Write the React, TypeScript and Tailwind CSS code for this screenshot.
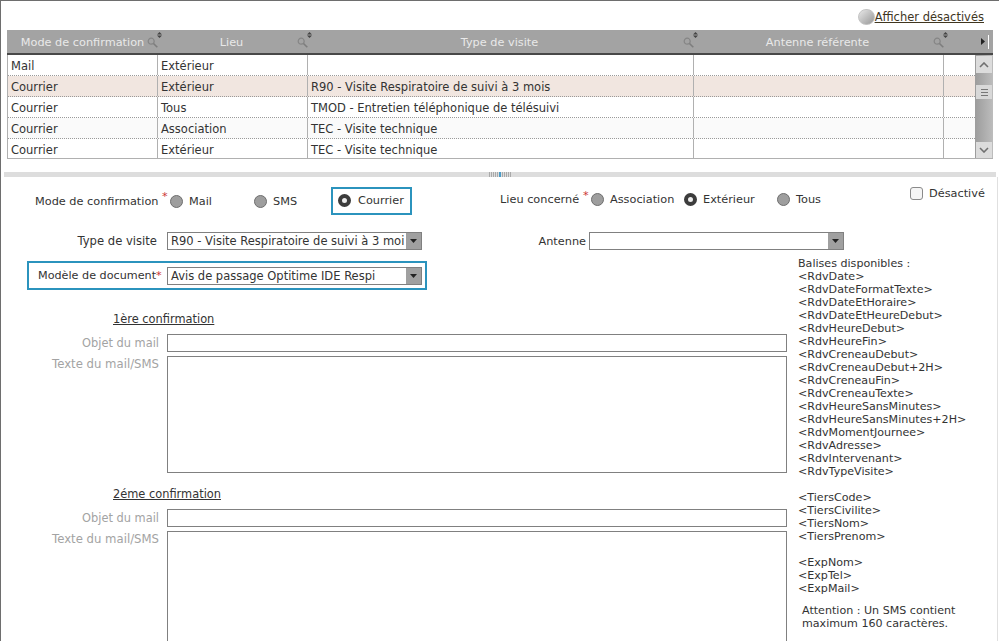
import React from "react";

const rows = [
  ["Mail", "Extérieur", "", false],
  ["Courrier", "Extérieur", "R90 - Visite Respiratoire de suivi à 3 mois", true],
  ["Courrier", "Tous", "TMOD - Entretien téléphonique de télésuivi", false],
  ["Courrier", "Association", "TEC - Visite technique", false],
  ["Courrier", "Extérieur", "TEC - Visite technique", false],
] as const;

const balises1 = ["<RdvDate>","<RdvDateFormatTexte>","<RdvDateEtHoraire>","<RdvDateEtHeureDebut>","<RdvHeureDebut>","<RdvHeureFin>","<RdvCreneauDebut>","<RdvCreneauDebut+2H>","<RdvCreneauFin>","<RdvCreneauTexte>","<RdvHeureSansMinutes>","<RdvHeureSansMinutes+2H>","<RdvMomentJournee>","<RdvAdresse>","<RdvIntervenant>","<RdvTypeVisite>"];
const balises2 = ["<TiersCode>","<TiersCivilite>","<TiersNom>","<TiersPrenom>"];
const balises3 = ["<ExpNom>","<ExpTel>","<ExpMail>"];

function Search() {
  return (
    <svg width="11" height="11" viewBox="0 0 11 11" className="shrink-0 block mt-[1px]">
      <circle cx="4.2" cy="4.2" r="3" fill="none" stroke="#858585" strokeWidth="1.2" />
      <path d="M6.5 6.5l3.8 3.8" stroke="#7d7d7d" strokeWidth="1.6" />
    </svg>
  );
}

function Sort() {
  return (
    <svg width="5" height="6" viewBox="0 0 5 6" className="absolute right-[-4px] top-[2px]">
      <path d="M0 2.5L2.5 0 5 2.5zM0 3.5h5L2.5 6z" fill="#444" />
    </svg>
  );
}

function Head({ label, w }: { label: string; w: string }) {
  return (
    <div className={`relative flex items-center self-stretch shrink-0 ${w}`}>
      <span className="flex-1 pl-[8px] text-center text-[#e9e9e9] mt-[1px]">{label}</span>
      <Search />
      <Sort />
    </div>
  );
}

function Radio({ on }: { on?: boolean }) {
  return on ? (
    <span className="w-[13px] h-[13px] rounded-full bg-[#eeeeee] border-[4px] border-[#3c3c3c] shrink-0" />
  ) : (
    <span className="w-[13px] h-[13px] rounded-full bg-[#9e9e9e] border border-[#6e6e6e] shrink-0" />
  );
}

function Arrow() {
  return (
    <span className="w-[15px] self-stretch bg-[#a0a0a0] flex items-center justify-center shrink-0">
      <svg width="7" height="4" viewBox="0 0 7 4"><path d="M0 0h7L3.5 4z" fill="#222" /></svg>
    </span>
  );
}

function Select({ value }: { value: string }) {
  return (
    <div className="flex items-stretch border border-[#808080] bg-white w-[255px] h-[18px] shrink-0 text-[11.5px]">
      <span className="flex-1 pl-[3px] overflow-hidden whitespace-nowrap text-[#333] leading-[16px]">{value}</span>
      <Arrow />
    </div>
  );
}

function Confirmation({ title, textH }: { title: string; textH: string }) {
  return (
    <div className="flex flex-col">
      <div className="pl-[112px] h-[21px] underline text-[#333] text-[11.4px]">{title}</div>
      <div className="flex items-center h-[18px]">
        <span className="w-[158px] text-right text-[#a3a3a3] shrink-0 text-[11.4px]">Objet du mail</span>
        <span className="ml-[8px] w-[620px] h-[18px] border border-[#808080] bg-white shrink-0" />
      </div>
      <div className="flex items-start mt-[4px]">
        <span className="w-[158px] text-right text-[#a3a3a3] shrink-0 mt-[2px] text-[11.7px]">Texte du mail/SMS</span>
        <span className={`ml-[8px] w-[620px] border border-[#808080] bg-white shrink-0 ${textH}`} />
      </div>
    </div>
  );
}

export default function App() {
  return (
    <div
      className="w-[999px] h-[641px] overflow-hidden bg-white border-t border-l border-[#6e6e6e] text-[11.3px] leading-[13px] text-[#333] flex flex-col"
      style={{ fontFamily: '"DejaVu Sans", Verdana, sans-serif' }}
    >
      <div className="h-[29px] flex items-start justify-end pr-[15px] pt-[8px] shrink-0">
        <span className="w-[17px] h-[16px] rounded-full bg-gradient-to-br from-[#e8e8e8] to-[#989898] border border-[#c4c4c4] shrink-0" />
        <span className="underline text-[#40361f] text-[11.5px] leading-[16px]">Afficher désactivés</span>
      </div>

      <div className="ml-[6px] w-[986px] h-[129px] border-b border-[#b0b0b0] shrink-0 flex flex-col">
        <div className="h-[25px] bg-[#a3a3a3] border-b-2 border-[#484848] flex items-center shrink-0">
          <div className="w-[3px] shrink-0" />
          <Head label="Mode de confirmation" w="w-[148px]" />
          <Head label="Lieu" w="w-[150px]" />
          <Head label="Type de visite" w="w-[386px]" />
          <Head label="Antenne référente" w="w-[250px]" />
          <div className="flex-1 flex items-center justify-end pr-[4px]">
            <svg width="4" height="7" viewBox="0 0 4 7"><path d="M0 0l4 3.5L0 7z" fill="#222" /></svg>
            <span className="ml-[3px] w-px h-[14px] bg-white" />
          </div>
        </div>
        <div className="flex-1 flex min-h-0 overflow-hidden">
          <div className="flex-1 flex flex-col border-l border-[#b0b0b0] min-w-0 text-[11.5px]">
            {rows.map((r, i) => (
              <div
                key={i}
                className={`h-[21px] shrink-0 flex items-stretch border-b border-dotted border-[#9a9a9a] last:border-b-0 ${r[3] ? "bg-[#f1e6e0]" : i === 3 ? "bg-[#fafafa]" : "bg-white"}`}
              >
                <div className="w-[150px] shrink-0 border-r border-[#b0b0b0] pl-[3px] pt-[5px]">{r[0]}</div>
                <div className="w-[150px] shrink-0 border-r border-[#b0b0b0] pl-[3px] pt-[5px]">{r[1]}</div>
                <div className="w-[386px] shrink-0 border-r border-[#b0b0b0] pl-[3px] pt-[5px]">{r[2]}</div>
                <div className="w-[250px] shrink-0 border-r border-[#b0b0b0]" />
                <div className="flex-1" />
              </div>
            ))}
          </div>
          <div className="w-[18px] shrink-0 bg-gradient-to-r from-[#9c9c9c] to-[#bdbdbd] flex flex-col">
            <div className="h-[17px] mt-[1px] mx-[1px] bg-[#dcdcdc] flex items-center justify-center shrink-0">
              <svg width="10" height="6" viewBox="0 0 10 6"><path d="M1 5l4-4 4 4" fill="none" stroke="#707070" strokeWidth="1.6" /></svg>
            </div>
            <div className="mt-[12px] h-[14px] mx-[1px] bg-[#d8d8d8] flex flex-col items-center justify-center gap-[2px] shrink-0">
              <span className="w-[7px] h-px bg-[#777]" />
              <span className="w-[7px] h-px bg-[#777]" />
              <span className="w-[7px] h-px bg-[#777]" />
            </div>
            <div className="flex-1" />
            <div className="h-[16px] mx-[1px] bg-[#dcdcdc] flex items-center justify-center shrink-0">
              <svg width="10" height="6" viewBox="0 0 10 6"><path d="M1 1l4 4 4-4" fill="none" stroke="#707070" strokeWidth="1.6" /></svg>
            </div>
          </div>
        </div>
      </div>

      <div className="mt-[13px] ml-[3px] w-[992px] h-[5px] bg-[#dddddd] flex items-center justify-center shrink-0">
        <div className="h-[5px] flex justify-center gap-px">
          {[0,1,2,3,4].map((i) => <span key={i} className="w-px h-full bg-[#aaa]" />)}
          <span className="w-[2px] h-full bg-[#4a9cc8]" />
          {[0,1,2,3,4].map((i) => <span key={i} className="w-px h-full bg-[#aaa]" />)}
        </div>
      </div>

      <div className="flex-1 flex flex-col min-h-0 pt-[9px] mr-px border-r border-[#e0e0e0]">
        <div className="flex items-center h-[29px] shrink-0">
          <span className="ml-[34px] w-[124px] mt-[2px] shrink-0">Mode de confirmation</span>
          <span className="text-[#c33] mt-[-8px] pl-[3px] w-[11px] shrink-0">*</span>
          <span className="mt-[2px] flex items-center">
            <Radio />
            <span className="ml-[6px] w-[65px] shrink-0">Mail</span>
            <Radio />
            <span className="ml-[6px] w-[58px] shrink-0">SMS</span>
          </span>
          <div className="w-[81px] h-[28px] border-2 border-[#2b93bd] flex items-center pl-[5px] shrink-0">
            <Radio on />
            <span className="ml-[7px]">Courrier</span>
          </div>
          <span className="ml-[88px] w-[80px] shrink-0 mt-[-2px] whitespace-nowrap">Lieu concerné</span>
          <span className="text-[#c33] mt-[-10px] pl-[3px] w-[11px] shrink-0">*</span>
          <span className="mt-[-2px] flex items-center">
            <Radio />
            <span className="ml-[6px] w-[74px] shrink-0">Association</span>
            <Radio on />
            <span className="ml-[6px] w-[74px] shrink-0">Extérieur</span>
            <Radio />
            <span className="ml-[6px] w-[114px] shrink-0">Tous</span>
          </span>
          <span className="mt-[-14px] w-[13px] h-[13px] rounded-[3px] border border-[#8a8a8a] bg-[#f5f5f5] shrink-0" />
          <span className="mt-[-14px] ml-[6px] shrink-0 whitespace-nowrap">Désactivé</span>
        </div>

        <div className="flex items-center mt-[17px] h-[18px] shrink-0">
          <span className="w-[156px] text-right shrink-0 text-[11.6px]">Type de visite</span>
          <span className="ml-[10px] shrink-0"><Select value="R90 - Visite Respiratoire de suivi à 3 moi" /></span>
          <span className="ml-[113px] w-[51px] text-right shrink-0">Antenne</span>
          <span className="ml-[3px] shrink-0"><Select value="" /></span>
        </div>

        <div className="flex flex-1 min-h-0">
          <div className="w-[797px] shrink-0 flex flex-col">
            <div className="ml-[26px] mt-[11px] w-[400px] h-[29px] border-2 border-[#2b93bd] flex items-center shrink-0">
              <span className="pl-[9px] w-[138px] shrink-0 whitespace-nowrap text-[11.2px]">
                Modèle de document<span className="text-[#c33]">*</span>
              </span>
              <Select value="Avis de passage Optitime IDE Respi" />
            </div>
            <div className="mt-[23px] flex flex-col gap-[15px]">
              <Confirmation title="1ère confirmation" textH="h-[117px]" />
              <Confirmation title="2éme confirmation" textH="h-[140px]" />
            </div>
          </div>
          <div className="flex-1 pt-[7px] text-[#333] text-[11.1px] flex flex-col whitespace-nowrap">
            <div>Balises disponibles :</div>
            {balises1.map((b) => <div key={b}>{b}</div>)}
            <div className="h-[13px]" />
            {balises2.map((b) => <div key={b}>{b}</div>)}
            <div className="h-[13px]" />
            {balises3.map((b) => <div key={b}>{b}</div>)}
            <div className="mt-[9px] pl-[4px] whitespace-pre-line">{"Attention : Un SMS contient\nmaximum 160 caractères."}</div>
          </div>
        </div>
      </div>
    </div>
  );
}
